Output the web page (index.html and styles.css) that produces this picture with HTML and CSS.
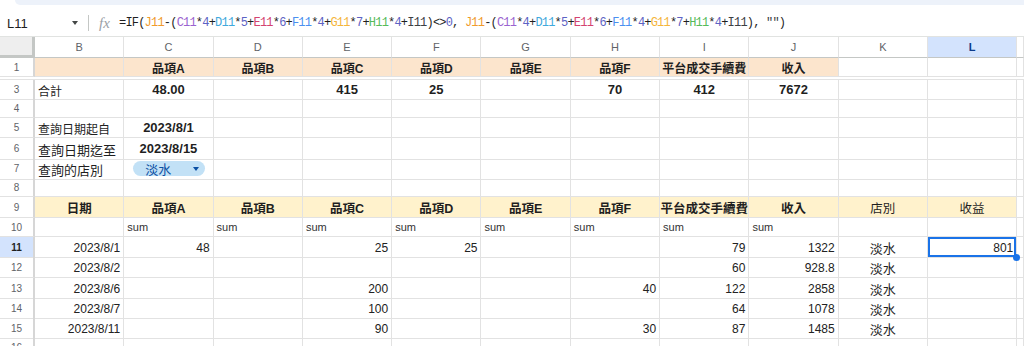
FILE: index.html
```html
<!DOCTYPE html>
<html>
<head>
  <meta charset="utf-8">
  <title>店別收益</title>
  <link rel="stylesheet" href="styles.css">
</head>
<body>
  <div class="toolbar"></div>

  <div class="formula-bar">
    <div class="name-box">L11</div>
    <div class="name-arrow"></div>
    <div class="divider"></div>
    <div class="fx">fx</div>
    <div class="formula">=IF(<span class="rj">J11</span>-(<span class="rc">C11</span>*<span class="num">4</span>+<span class="rd">D11</span>*<span class="num">5</span>+<span class="re">E11</span>*<span class="num">6</span>+<span class="rf">F11</span>*<span class="num">4</span>+<span class="rg">G11</span>*<span class="num">7</span>+<span class="rh2">H11</span>*<span class="num">4</span>+<span class="ri">I11</span>)&lt;&gt;<span class="num">0</span>, <span class="rj">J11</span>-(<span class="rc">C11</span>*<span class="num">4</span>+<span class="rd">D11</span>*<span class="num">5</span>+<span class="re">E11</span>*<span class="num">6</span>+<span class="rf">F11</span>*<span class="num">4</span>+<span class="rg">G11</span>*<span class="num">7</span>+<span class="rh2">H11</span>*<span class="num">4</span>+<span class="ri">I11</span>), <span class="str">""</span>)</div>
  </div>

  <div class="sheet">
    <!-- column letters -->
    <div class="row col-head">
      <div class="corner"></div>
      <div>B</div><div>C</div><div>D</div><div>E</div><div>F</div><div>G</div>
      <div>H</div><div>I</div><div>J</div><div>K</div><div class="active">L</div><div></div>
    </div>

    <div class="row short">
      <div class="rh">1</div>
      <div class="peach"></div>
      <div class="peach head">品項A</div>
      <div class="peach head">品項B</div>
      <div class="peach head">品項C</div>
      <div class="peach head">品項D</div>
      <div class="peach head">品項E</div>
      <div class="peach head">品項F</div>
      <div class="peach head">平台成交手續費</div>
      <div class="peach head">收入</div>
      <div></div><div></div><div></div>
    </div>

    <div class="hidden-row"></div>

    <div class="row short">
      <div class="rh">3</div>
      <div class="label">合計</div>
      <div class="total">48.00</div>
      <div></div>
      <div class="total">415</div>
      <div class="total">25</div>
      <div></div>
      <div class="total">70</div>
      <div class="total">412</div>
      <div class="total">7672</div>
      <div></div><div></div><div></div>
    </div>

    <div class="row short">
      <div class="rh">4</div>
      <div></div><div></div><div></div><div></div><div></div><div></div>
      <div></div><div></div><div></div><div></div><div></div><div></div>
    </div>

    <div class="row">
      <div class="rh">5</div>
      <div class="label">查詢日期起自</div>
      <div class="total">2023/8/1</div>
      <div></div><div></div><div></div><div></div>
      <div></div><div></div><div></div><div></div><div></div><div></div>
    </div>

    <div class="row">
      <div class="rh">6</div>
      <div class="label big">查詢日期迄至</div>
      <div class="total">2023/8/15</div>
      <div></div><div></div><div></div><div></div>
      <div></div><div></div><div></div><div></div><div></div><div></div>
    </div>

    <div class="row">
      <div class="rh">7</div>
      <div class="label big">查詢的店別</div>
      <div class="chip-cell"><span class="chip">淡水<i class="chip-arrow"></i></span></div>
      <div></div><div></div><div></div><div></div>
      <div></div><div></div><div></div><div></div><div></div><div></div>
    </div>

    <div class="row short">
      <div class="rh">8</div>
      <div></div><div></div><div></div><div></div><div></div><div></div>
      <div></div><div></div><div></div><div></div><div></div><div></div>
    </div>

    <div class="row tall">
      <div class="rh">9</div>
      <div class="yellow head">日期</div>
      <div class="yellow head">品項A</div>
      <div class="yellow head">品項B</div>
      <div class="yellow head">品項C</div>
      <div class="yellow head">品項D</div>
      <div class="yellow head">品項E</div>
      <div class="yellow head">品項F</div>
      <div class="yellow head">平台成交手續費</div>
      <div class="yellow head">收入</div>
      <div class="yellow head light">店別</div>
      <div class="yellow head light">收益</div>
      <div></div>
    </div>

    <div class="row short">
      <div class="rh">10</div>
      <div></div>
      <div class="agg">sum</div><div class="agg">sum</div><div class="agg">sum</div><div class="agg">sum</div>
      <div class="agg">sum</div><div class="agg">sum</div><div class="agg">sum</div><div class="agg">sum</div>
      <div></div><div></div><div></div>
    </div>

    <div class="row">
      <div class="rh current">11</div>
      <div class="num-cell">2023/8/1</div>
      <div class="num-cell">48</div>
      <div></div>
      <div class="num-cell">25</div>
      <div class="num-cell">25</div>
      <div></div>
      <div></div>
      <div class="num-cell">79</div>
      <div class="num-cell">1322</div>
      <div class="store">淡水</div>
      <div class="num-cell selected">801</div>
      <div></div>
    </div>

    <div class="row tall">
      <div class="rh">12</div>
      <div class="num-cell">2023/8/2</div>
      <div></div><div></div><div></div><div></div><div></div><div></div>
      <div class="num-cell">60</div>
      <div class="num-cell">928.8</div>
      <div class="store">淡水</div>
      <div></div><div></div>
    </div>

    <div class="row">
      <div class="rh">13</div>
      <div class="num-cell">2023/8/6</div>
      <div></div><div></div>
      <div class="num-cell">200</div>
      <div></div><div></div>
      <div class="num-cell">40</div>
      <div class="num-cell">122</div>
      <div class="num-cell">2858</div>
      <div class="store">淡水</div>
      <div></div><div></div>
    </div>

    <div class="row">
      <div class="rh">14</div>
      <div class="num-cell">2023/8/7</div>
      <div></div><div></div>
      <div class="num-cell">100</div>
      <div></div><div></div><div></div>
      <div class="num-cell">64</div>
      <div class="num-cell">1078</div>
      <div class="store">淡水</div>
      <div></div><div></div>
    </div>

    <div class="row">
      <div class="rh">15</div>
      <div class="num-cell">2023/8/11</div>
      <div></div><div></div>
      <div class="num-cell">90</div>
      <div></div><div></div>
      <div class="num-cell">30</div>
      <div class="num-cell">87</div>
      <div class="num-cell">1485</div>
      <div class="store">淡水</div>
      <div></div><div></div>
    </div>

    <div class="row">
      <div class="rh">16</div>
      <div></div><div></div><div></div><div></div><div></div><div></div>
      <div></div><div></div><div></div><div></div><div></div><div></div>
    </div>
  </div>
</body>
</html>
```

FILE: styles.css
```css
* {
  box-sizing: border-box;
}

body {
  margin: 0;
  width: 1024px;
  height: 346px;
  overflow: hidden;
  background: #fff;
  color: #1f1f1f;
  font-family: "Liberation Sans", Arial, "Noto Sans CJK TC", sans-serif;
}

.toolbar {
  height: 5px;
  margin-left: 15px;
  background: #edf2fa;
  border-bottom-left-radius: 5px;
}

/* formula bar */

.formula-bar {
  display: flex;
  align-items: center;
  height: 32px;
  padding-top: 5px;
  border-bottom: 1px solid #e1e3e1;
}

.name-box {
  width: 72px;
  padding-left: 7px;
  font-size: 13px;
  color: #1f1f1f;
}

.name-arrow {
  width: 0;
  height: 0;
  border-left: 3.5px solid transparent;
  border-right: 3.5px solid transparent;
  border-top: 4px solid #444746;
}

.divider {
  width: 1px;
  height: 16px;
  margin-left: 10px;
  background: #c4c7c5;
}

.fx {
  width: 14px;
  margin-left: 10px;
  font-family: "Liberation Serif", serif;
  font-style: italic;
  font-size: 15px;
  color: #9aa0a6;
}

.formula {
  margin-left: 6px;
  font-family: "Liberation Mono", "DejaVu Sans Mono", monospace;
  font-size: 12px;
  letter-spacing: -0.8px;
  color: #1f1f1f;
  white-space: nowrap;
}

.rj { color: #f09a2c; }
.rc { color: #9a63d0; }
.rd { color: #3fa9dd; }
.re { color: #d3436f; }
.rf { color: #4a8ff0; }
.rg { color: #f5b53a; }
.rh2 { color: #57bb5a; }
.ri { color: #3c4043; }
.num { color: #5c62c4; }
.str { color: #3c4043; }

/* grid */

.row {
  display: grid;
  grid-template-columns: 35px repeat(11, 89.3px) 1fr;
  height: 20px;
}

.row.short {
  height: 19px;
}

.row.tall {
  height: 21px;
}

.row > div {
  display: flex;
  align-items: center;
  padding: 0 3px;
  border-right: 1px solid #e2e2e2;
  border-bottom: 1px solid #e2e2e2;
  white-space: nowrap;
  font-size: 12px;
  min-width: 0;
}

.col-head {
  height: 21px;
}

.col-head > div {
  justify-content: center;
  font-size: 11px;
  color: #5f6368;
  border-bottom-color: #c4c7c5;
}

.col-head > .corner {
  background: #eeeeee;
  border-right: 3px solid #c4c7c5;
  border-bottom: 3px solid #c4c7c5;
}

.col-head > .active {
  background: #d3e3fd;
  color: #0b3a8a;
  font-weight: bold;
}

.row > .rh {
  justify-content: center;
  font-size: 10px;
  color: #5f6368;
  border-right: 2px solid #d6d6d6;
}

.row > .rh.current {
  background: #d3e3fd;
  color: #1f1f1f;
  font-weight: bold;
}

.hidden-row {
  height: 3px;
  border-bottom: 1px solid #e2e2e2;
}

.peach {
  background: #fce5cd;
}

.yellow {
  background: #fff2cc;
}

.row > .head {
  justify-content: center;
  font-weight: bold;
  overflow: visible;
}

.row > .peach.head {
  font-size: 12px;
}

.row > .yellow.head {
  font-size: 12.5px;
}

.row > .head.light {
  font-weight: normal;
  color: #1f1f1f;
}

.row > .label {
  font-size: 12px;
  padding-top: 2px;
}

.row > .label.big {
  font-size: 13px;
}

.row > .total {
  justify-content: center;
  font-weight: bold;
  font-size: 13px;
}

.row > .agg {
  font-size: 11px;
  color: #333;
}

.row > .num-cell {
  justify-content: flex-end;
  padding-top: 1px;
  color: #222;
}

.row > .store {
  justify-content: center;
  font-size: 13px;
  padding-top: 1px;
}

.selected {
  position: relative;
  box-shadow: inset 0 0 0 2px #1a73e8;
}

.selected::after {
  content: "";
  position: absolute;
  right: -4px;
  bottom: -4px;
  width: 7px;
  height: 7px;
  border-radius: 50%;
  background: #1a73e8;
}

/* dropdown chip */

.chip {
  display: flex;
  align-items: center;
  width: 72px;
  height: 15px;
  margin-left: 6px;
  padding-left: 12px;
  border-radius: 8px;
  background: #c2e1f6;
  color: #0b4fa3;
  font-size: 13px;
}

.chip-arrow {
  width: 0;
  height: 0;
  margin-left: auto;
  margin-right: 6px;
  border-left: 3.5px solid transparent;
  border-right: 3.5px solid transparent;
  border-top: 4px solid #0b4fa3;
}
```
